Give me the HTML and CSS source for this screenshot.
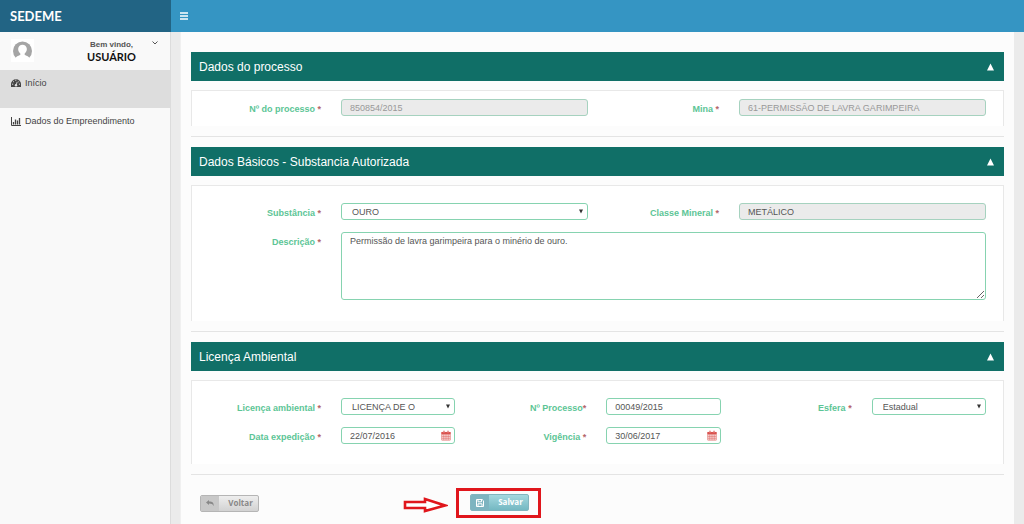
FILE: index.html
```html
<!DOCTYPE html>
<html lang="pt-BR">
<head>
<meta charset="utf-8">
<meta name="viewport" content="width=device-width, initial-scale=1">
<title>SEDEME</title>
<link rel="stylesheet" href="styles.css">
</head>
<body>
<svg class="sprite" aria-hidden="true">
  <symbol id="calendar" viewBox="0 0 13 14">
    <path d="M1 3h11v10H1z M1 5.500h11 M3.700 5.500v7.500 M6.500 5.500v7.500 M9.300 5.500v7.500 M1 8h11 M1 10.500h11" fill="none" stroke="currentColor" stroke-width=".8"/>
    <path d="M.6 2.500h11.800V5H.6z M3 .8h1.700v3H3z M8.300.8H10v3H8.300z" fill="currentColor"/>
    <path d="M3.850 1.500v1.800 M9.150 1.500v1.800" stroke="#fff" stroke-width=".6"/>
  </symbol>
  <symbol id="caret" viewBox="0 0 6 6"><path d="M0 0h6L3 6z" fill="currentColor"/></symbol>
  <symbol id="collapse" viewBox="0 0 8 8"><path d="M4 0l4 8H0z" fill="currentColor"/></symbol>
</svg>

<header class="topbar">
  <div class="brand">SEDEME</div>
  <button class="menu-toggle" type="button" aria-label="Menu">
    <svg viewBox="0 0 8 8"><path d="M0 1h8M0 4h8M0 7h8" stroke="currentColor" stroke-width="1.400"/></svg>
  </button>
</header>

<div class="layout">
  <aside class="sidebar">
    <div class="user">
      <svg class="avatar" viewBox="0 0 23 23">
        <rect width="23" height="23" fill="#fff"/>
        <circle cx="11.500" cy="12" r="9.500" fill="#a5a5a5"/>
        <path d="M4 20.500c.5-3 3-3.500 5.300-4.500v-1.500C7.500 13 7 11 7.200 9.500 7.500 7 9.200 5.700 11.500 5.700s4 1.300 4.300 3.800c.2 1.500-.3 3.500-2.100 5V16c2.300 1 4.800 1.500 5.300 4.500V23H4z" fill="#fff"/>
      </svg>
      <div class="user-text">
        <span class="welcome">Bem vindo,</span>
        <strong class="user-name">USUÁRIO</strong>
      </div>
      <svg class="chevron" viewBox="0 0 6 6"><path d="M.5 1.500L3 4l2.500-2.500" fill="none" stroke="currentColor"/></svg>
    </div>
    <nav class="nav">
      <a class="nav-item active" href="#">
        <svg class="nav-icon" viewBox="0 0 10 10"><path d="M0 9V6a5 4.700 0 0 1 10 0v3z" fill="currentColor"/><path d="M5 7.500l1.200-3.700" stroke="#ddd" stroke-width=".9"/><circle cx="5" cy="7.300" r="1.200" fill="#ddd"/><path d="M1 6.200h1.200M7.900 6.200H9M2.200 3.400l.8.800M4.300 2.300h1M7.400 3.900l.7-.6" stroke="#ddd"/></svg>
        Início
      </a>
      <a class="nav-item" href="#">
        <svg class="nav-icon" viewBox="0 0 10 10"><path d="M.5 1v8.500H10" fill="none" stroke="currentColor"/><path d="M2.500 8.500V6M4.500 8.500V3.500M6.500 8.500v-4M8.500 8.500V2" stroke="currentColor" stroke-width="1.300"/></svg>
        Dados do Empreendimento
      </a>
    </nav>
  </aside>

  <main class="content">
    <form class="panel">
      <section class="section">
        <h2 class="section-title">Dados do processo <svg class="collapse"><use href="#collapse"/></svg></h2>
        <div class="box box-compact halves">
          <div class="field">
            <label for="num">Nº do processo <i>*</i></label>
            <input id="num" class="control" type="text" value="850854/2015" disabled>
          </div>
          <div class="field">
            <label for="mina">Mina <i>*</i></label>
            <input id="mina" class="control" type="text" value="61-PERMISSÃO DE LAVRA GARIMPEIRA" disabled>
          </div>
        </div>
      </section>

      <section class="section">
        <h2 class="section-title">Dados Básicos - Substancia Autorizada <svg class="collapse"><use href="#collapse"/></svg></h2>
        <div class="box box-tall halves">
          <div class="field">
            <label for="subst">Substância <i>*</i></label>
            <div class="control-wrap">
              <select id="subst" class="control"><option>OURO</option></select>
              <svg class="caret"><use href="#caret"/></svg>
            </div>
          </div>
          <div class="field">
            <label for="classe">Classe Mineral <i>*</i></label>
            <input id="classe" class="control" type="text" value="METÁLICO" readonly>
          </div>
          <div class="field field-full">
            <label for="descr">Descrição <i>*</i></label>
            <textarea id="descr" class="control">Permissão de lavra garimpeira para o minério de ouro.</textarea>
          </div>
        </div>
      </section>

      <section class="section">
        <h2 class="section-title">Licença Ambiental <svg class="collapse"><use href="#collapse"/></svg></h2>
        <div class="box thirds">
          <div class="field">
            <label for="lic">Licença ambiental <i>*</i></label>
            <div class="control-wrap">
              <select id="lic" class="control"><option>LICENÇA DE O</option></select>
              <svg class="caret"><use href="#caret"/></svg>
            </div>
          </div>
          <div class="field">
            <label for="nproc">Nº Processo<i>*</i></label>
            <input id="nproc" class="control" type="text" value="00049/2015">
          </div>
          <div class="field">
            <label for="esfera">Esfera <i>*</i></label>
            <div class="control-wrap">
              <select id="esfera" class="control"><option>Estadual</option></select>
              <svg class="caret"><use href="#caret"/></svg>
            </div>
          </div>
          <div class="field">
            <label for="exped">Data expedição <i>*</i></label>
            <div class="control-wrap">
              <input id="exped" class="control" type="text" value="22/07/2016">
              <svg class="calendar"><use href="#calendar"/></svg>
            </div>
          </div>
          <div class="field">
            <label for="vig">Vigência <i>*</i></label>
            <div class="control-wrap">
              <input id="vig" class="control" type="text" value="30/06/2017">
              <svg class="calendar"><use href="#calendar"/></svg>
            </div>
          </div>
        </div>
      </section>

      <div class="actions">
        <div>
          <button class="btn btn-back" type="button">
            <span class="btn-icon"><svg viewBox="0 0 8 8"><path d="M0 3.500L3 1v1.600c3.500 0 5 1.400 4.500 4.600C6.800 5.200 5.500 4.600 3 4.600V6z" fill="currentColor"/></svg></span>
            <span class="btn-label">Voltar</span>
          </button>
        </div>
        <div class="callout">
          <svg class="arrow" viewBox="0 0 45 16"><path d="M2 5h20V2l20 6.500L22 14v-3H2z" fill="#fff" stroke="#e0161c" stroke-width="2.600"/></svg>
          <div class="highlight">
            <button class="btn btn-save" type="submit">
              <span class="btn-icon"><svg viewBox="0 0 8 8"><path d="M.5.5h5.700l1.300 1.300v5.700h-7z M2 .5v2.300h3.500V.5 M2 7.500V4.800h4v2.700" fill="none" stroke="currentColor"/></svg></span>
              <span class="btn-label">Salvar</span>
            </button>
          </div>
        </div>
      </div>
    </form>
  </main>
</div>
</body>
</html>
```
FILE: styles.css
```css
* { box-sizing: border-box; }

body {
  margin: 0;
  min-height: 100vh;
  display: flex;
  flex-direction: column;
  background: #ebebeb;
  color: #555;
  font: 9px/12px "Liberation Sans", Arial, sans-serif;
}

.sprite { display: none; }

.topbar {
  display: flex;
  height: 32px;
  background: #3595c3;
  color: #fff;
}

.brand {
  width: 171px;
  padding: 0 10px;
  background: #226484;
  font: bold 13px/32px Lato, sans-serif;
}

.menu-toggle {
  padding: 0 9px;
  border: 0;
  background: none;
  color: #fff;
}

.menu-toggle svg { display: block; width: 8px; height: 8px; }

.layout { flex: 1; display: flex; }

.sidebar {
  width: 171px;
  background: #f9f9f9;
  border-right: 1px solid #dcdcdc;
}

.user {
  display: flex;
  align-items: flex-start;
  height: 38px;
  padding: 7px 12px 0 11px;
}

.avatar { width: 23px; height: 23px; }

.user-text {
  flex: 1;
  display: flex;
  flex-direction: column;
  align-items: center;
  padding-left: 37px;
}

.welcome { font-weight: bold; font-size: 8px; }
.user-name { color: #111; font: bold 11px/12px Lato, sans-serif; }
.chevron { width: 6px; height: 6px; margin-top: 1px; }

.nav-item {
  display: flex;
  align-items: center;
  gap: 4px;
  padding: 7px 11px 19px;
  color: #444;
  text-decoration: none;
}

.active { background: #ddd; }
.nav-icon { width: 10px; height: 10px; }

.content { flex: 1; padding: 0 10px 0 9px; }

.panel {
  min-height: 100%;
  padding: 20px 10px 7px;
  background: #fcfcfc;
  border-left: 1px solid #f0f0f0;
}

.section {
  margin-bottom: 10px;
  padding-bottom: 10px;
  border-bottom: 1px solid #e4e4e4;
}

.section-title {
  display: flex;
  align-items: center;
  justify-content: space-between;
  height: 29px;
  margin: 0 0 9px;
  padding: 0 10px 0 8px;
  background: #106f67;
  color: #fff;
  font-size: 12px;
  font-weight: normal;
}

.collapse { width: 7px; height: 8px; }

.box {
  display: grid;
  gap: 12px 2px;
  padding: 17px 17px 20px 0;
  background: #fff;
  border: 1px solid #e8e8e8;
  border-bottom: 0;
}

.box-compact { padding-top: 8px; padding-bottom: 10px; }
.box-tall { padding-bottom: 21px; }
.halves { grid-template-columns: repeat(2, minmax(0, 1fr)); }
.thirds { grid-template-columns: repeat(3, minmax(0, 1fr)); }

.field {
  display: grid;
  grid-template-columns: 129px minmax(0, 1fr);
  column-gap: 20px;
}

.field-full { grid-column: 1 / -1; }

.field label {
  padding-top: 4px;
  color: #5cc596;
  font-weight: bold;
  text-align: right;
}

.field i { color: #b5656a; font-style: normal; }

.control-wrap { position: relative; }

.control {
  display: block;
  width: 100%;
  height: 17px;
  margin: 0;
  padding: 0 8px;
  appearance: none;
  background: #fff;
  border: 1px solid #86d3b0;
  border-radius: 3px;
  color: #555;
  font: inherit;
}

select.control { padding: 0 10px; }
.control:disabled { background: #ebebeb; border-color: #a6d2bf; color: #999; }
input.control:read-only { background: #ebebeb; border-color: #a6d2bf; }
textarea.control { height: 68px; padding: 2px 8px; }

.caret {
  position: absolute;
  top: 6px;
  right: 5px;
  width: 4px;
  height: 5px;
  color: #333;
  pointer-events: none;
}

.calendar {
  position: absolute;
  top: 3px;
  right: 4px;
  width: 10px;
  height: 11px;
  color: #d9534f;
}

.actions {
  display: grid;
  grid-template-columns: 1fr 3fr;
  align-items: center;
  padding: 3px 0 0 9px;
}

.callout { display: flex; align-items: center; gap: 8px; padding-left: 2px; }
.arrow { width: 45px; height: 16px; margin-top: 4px; }

.highlight {
  padding: 3px 9px 4px 11px;
  border: 3px solid #e0161c;
}

.btn {
  display: flex;
  width: 59px;
  height: 17px;
  padding: 0;
  overflow: hidden;
  border: 1px solid #b5b5b5;
  border-radius: 2px;
  font: bold 8px/14px "Open Sans", sans-serif;
}

.btn-icon {
  display: flex;
  align-items: center;
  justify-content: center;
  width: 18px;
  height: 100%;
}

.btn-icon svg { width: 8px; height: 8px; }
.btn-label { flex: 1; padding-left: 4px; }

.btn-back { background: linear-gradient(#eee, #d2d2d2); color: #888; }
.btn-back .btn-icon { background: #c8c8c8; }
.btn-save { background: linear-gradient(#a5d8df, #74b8c2); border-color: #82b5bf; color: #fff; }
.btn-save .btn-icon { background: #7db4c0; }
```
